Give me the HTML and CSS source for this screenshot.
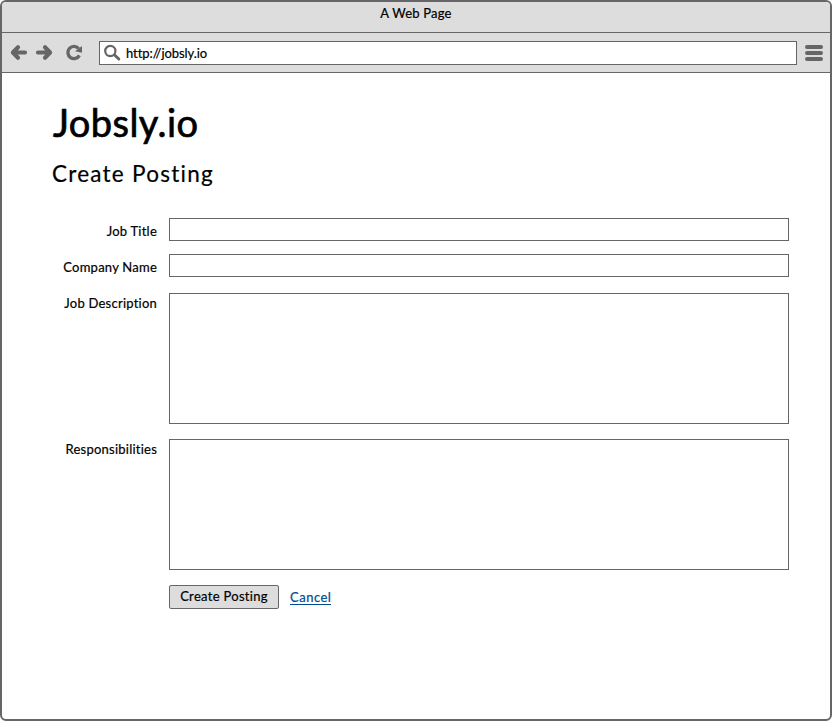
FILE: index.html
```html
<!DOCTYPE html>
<html lang="en">
<head>
<meta charset="utf-8">
<title>A Web Page</title>
<link rel="stylesheet" href="styles.css">
</head>
<body>
<div class="window">
  <div class="titlebar"><span class="window-title">A Web Page</span></div>
  <div class="toolbar">
    <svg class="nav" width="86" height="39" viewBox="0 0 86 39" fill="none" stroke="#666" stroke-width="4.2" stroke-linecap="round" stroke-linejoin="round">
      <path d="M16 14.2 10.9 19.5 16 24.8M11.5 19.5H23"/>
      <path d="M43 14.2 48.1 19.5 43 24.8M47.5 19.5H36"/>
      <path stroke-width="3.3" stroke-linecap="butt" d="M76.6 15.5A6.1 6.1 0 1 0 77.4 22.4"/>
      <path fill="#666" stroke="none" d="M80 13V19.8L73 18.2Z"/>
    </svg>
    <div class="address">
      <svg class="search" width="18" height="18" viewBox="0 0 18 18" fill="none" stroke="#666"><circle cx="6.3" cy="7" r="5.1" stroke-width="2.2"/><path d="m10.6 11 4.2 4" stroke-width="3" stroke-linecap="round"/></svg>
      <span class="url">http://jobsly.io</span>
    </div>
    <div class="menu"><i></i><i></i><i></i></div>
  </div>
  <main>
    <h1>Jobsly.io</h1>
    <h2>Create Posting</h2>
    <form>
      <label for="title">Job Title</label><input id="title">
      <label for="company">Company Name</label><input id="company">
      <label for="description" class="area-label">Job Description</label><textarea id="description"></textarea>
      <label for="duties" class="area-label">Responsibilities</label><textarea id="duties"></textarea>
      <div class="actions"><button type="button">Create Posting</button><a href="#">Cancel</a></div>
    </form>
  </main>
</div>
</body>
</html>
```
FILE: styles.css
```css
* { box-sizing: border-box; }
body { margin: 0; background: #fff; color: #000; font: 400 13px/18px Lato, "Open Sans", sans-serif; -webkit-text-stroke: .2px currentColor; }
.window { height: 721px; border: 2px solid #666; border-radius: 6px; overflow: hidden; }
.titlebar { height: 31px; background: #ddd; border-bottom: 1px solid #666; text-align: center; padding-top: 2px; }
.window-title { letter-spacing: .2px; }
.toolbar { height: 40px; background: #ddd; border-bottom: 1px solid #666; display: flex; align-items: center; }
.nav { margin-right: 11px; flex: none; }
.address { width: 698px; height: 24px; background: #fff; border: 1px solid #666; display: flex; align-items: center; padding-left: 4px; }
.search { margin-right: 4px; }
.url { letter-spacing: -.07px; }
.menu { margin-left: 7.5px; width: 18px; display: grid; gap: 2px; }
.menu i { height: 4px; border-radius: 2px; background: #666; }
main { padding: 26px 41px 0 51px; }
h1, h2 { margin: 0; font-weight: 400; white-space: nowrap; }
h1 { font-size: 38px; line-height: 46px; letter-spacing: .45px; -webkit-text-stroke-width: .7px; }
h2 { margin-top: 13px; margin-left: -1px; font-size: 22.5px; line-height: 32px; letter-spacing: 1.25px; -webkit-text-stroke-width: .2px; }
form { margin-top: 28px; display: grid; grid-template-columns: 104px 620px; column-gap: 12px; grid-template-rows: 36px 39px 146px 146px 24px; align-items: start; }
label { padding-top: 4px; text-align: right; white-space: nowrap; letter-spacing: .23px; }
.area-label { padding-top: 1px; }
input, textarea { display: block; width: 100%; margin: 0; padding: 2px 5px; border: 1px solid #666; border-radius: 0; background: #fff; font: inherit; resize: none; outline: 0; }
input { height: 23px; }
textarea { height: 131px; }
.actions { grid-column: 2; display: flex; }
button { width: 110px; height: 24px; margin: 0 11px 0 0; padding: 0 0 2px; border: 1px solid #666; border-radius: 2px; background: #ddd; color: #000; font: inherit; letter-spacing: .3px; white-space: nowrap; }
a { height: 20px; padding-top: 3px; color: #004b91; text-decoration: none; border-bottom: 1px solid #004b91; letter-spacing: .5px; }
```
